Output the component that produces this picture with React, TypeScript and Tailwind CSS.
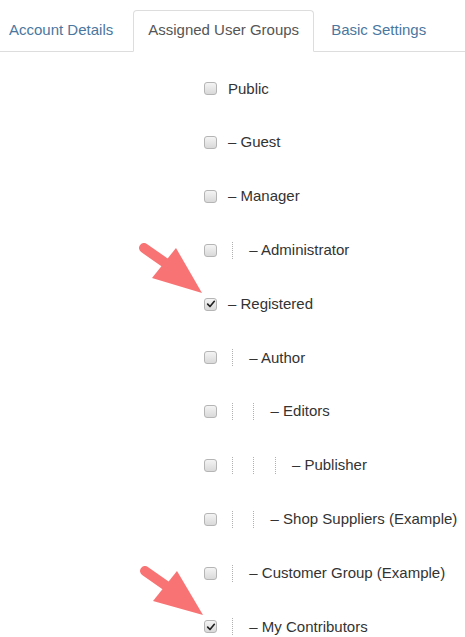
import React from "react";

type Group = { name: string; level: number; checked?: boolean };

const groups: Group[] = [
  { name: "Public", level: 0 },
  { name: "Guest", level: 1 },
  { name: "Manager", level: 1 },
  { name: "Administrator", level: 2 },
  { name: "Registered", level: 1, checked: true },
  { name: "Author", level: 2 },
  { name: "Editors", level: 3 },
  { name: "Publisher", level: 4 },
  { name: "Shop Suppliers (Example)", level: 3 },
  { name: "Customer Group (Example)", level: 2 },
  { name: "My Contributors", level: 2, checked: true },
];

const Checkbox = ({ checked }: { checked?: boolean }) => (
  <span className="relative flex h-[13px] w-[13px] shrink-0 items-center justify-center rounded-[3px] border border-[#b5b5b5] bg-gradient-to-b from-[#f4f4f4] to-[#d9d9d9]">
    {checked && (
      <svg viewBox="0 0 12 12" className="h-[10px] w-[10px]">
        <path d="M2 6.2 L4.8 9 L10 2.8" fill="none" stroke="#222" strokeWidth="2" strokeLinecap="round" strokeLinejoin="round" />
      </svg>
    )}
  </span>
);

const Arrow = ({ x1, y1, x2, y2, head }: { x1: number; y1: number; x2: number; y2: number; head: string }) => (
  <g opacity="0.85">
    <line x1={x1} y1={y1} x2={x2} y2={y2} stroke="#f75c5c" strokeWidth="10" strokeLinecap="round" />
    <polygon points={head} fill="#f75c5c" />
  </g>
);

export default function App() {
  return (
    <div className="relative h-[637px] w-[465px] overflow-hidden bg-white font-['Liberation_Sans',Arial,sans-serif] text-[15px]">
      {/* Tabs */}
      <div className="flex border-b border-[#dddddd] pt-[10px]">
        <div className="-ml-[6px] mr-[5px] px-[15px] pt-[10px] pb-[10px] text-[#4a77a0] leading-[20px]">Account Details</div>
        <div className="-mb-px rounded-t-[4px] border border-b-white border-[#dddddd] bg-white px-[14px] pt-[9px] pb-[11px] text-[#555] leading-[20px]">
          Assigned User Groups
        </div>
        <div className="ml-[2px] px-[15px] pt-[10px] pb-[10px] text-[#4a77a0] leading-[20px]">Basic Settings</div>
      </div>

      {/* Group list */}
      <div className="ml-[204px] pt-[10px]">
        {groups.map((g) => (
          <div key={g.name} className="flex h-[53.8px] items-center text-[#333]">
            <Checkbox checked={g.checked} />
            <span className="ml-[11px] flex items-center whitespace-nowrap">
              {Array.from({ length: Math.max(0, g.level - 1) }).map((_, i) => (
                <span key={i} className="flex h-[17px] w-[21.3px] shrink-0">
                  <span className="ml-[4px] h-full border-l border-dotted border-[#b0b0b0]" />
                </span>
              ))}
              {g.level > 0 ? `– ${g.name}` : g.name}
            </span>
          </div>
        ))}
      </div>

      {/* Arrows */}
      <svg className="pointer-events-none absolute inset-0" width="465" height="637">
        <Arrow x1={144} y1={248} x2={174} y2={269} head="176,248 152,278 202,293" />
        <Arrow x1={145} y1={571} x2={175} y2={592} head="177,571 153,601 203,615" />
      </svg>
    </div>
  );
}
